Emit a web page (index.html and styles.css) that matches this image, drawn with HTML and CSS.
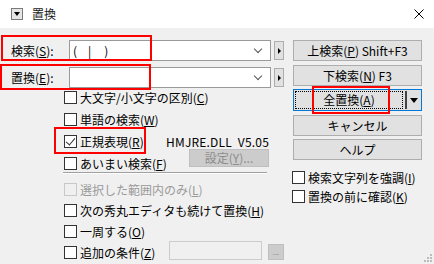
FILE: index.html
```html
<!DOCTYPE html>
<html lang="ja">
<head>
    <meta charset="UTF-8">
    <title>置換</title>
    <link rel="stylesheet" href="styles.css">
</head>
<body>
    <div class="titlebar">
        <span class="sysicon"></span>
        <span class="title">置換</span>
        <svg class="close" width="10" height="10" viewBox="0 0 10 10">
            <path d="M0.5 0.5 L9.5 9.5 M9.5 0.5 L0.5 9.5" stroke="#000" stroke-width="1"/>
        </svg>
    </div>

    <div class="dialog">
        <div class="left">
            <div class="field">
                <label class="flabel">検索(<u>S</u>):</label>
                <div class="combo"><span class="ctext">(<span class="gap"></span>|<span class="gap wide"></span>)</span><span class="chev"></span></div>
                <span class="mini"></span>
            </div>
            <div class="field second">
                <label class="flabel">置換(<u>E</u>):</label>
                <div class="combo"><span class="ctext"></span><span class="chev"></span></div>
                <span class="mini"></span>
            </div>

            <div class="opts upper">
                <div class="cb"><span class="box"></span>大文字/小文字の区別(<u>C</u>)</div>
                <div class="cb"><span class="box"></span>単語の検索(<u>W</u>)</div>
                <div class="cb"><span class="opt-w1"><span class="box checked"></span>正規表現(<u>R</u>)</span><span class="dll">HMJRE.DLL&nbsp; V5.05</span></div>
                <div class="cb"><span class="opt-w2"><span class="box"></span>あいまい検索(<u>F</u>)</span><span class="btn off setbtn">設定(<u>Y</u>)...</span></div>
            </div>

            <div class="sep"></div>

            <div class="opts lower">
                <div class="cb dis"><span class="box"></span>選択した範囲内のみ(<u>L</u>)</div>
                <div class="cb"><span class="box"></span>次の秀丸エディタも続けて置換(<u>H</u>)</div>
                <div class="cb"><span class="box"></span>一周する(<u>O</u>)</div>
                <div class="cb"><span class="opt-w3"><span class="box"></span>追加の条件(<u>Z</u>)</span><span class="tbox"></span><span class="btn off dots">...</span></div>
            </div>
        </div>

        <div class="right">
            <div class="btn">上検索(<u>P</u>) Shift+F3</div>
            <div class="btn">下検索(<u>N</u>) F3</div>
            <div class="btn split">
                <span class="main">全置換(<u>A</u>)</span>
                <span class="drop"></span>
            </div>
            <div class="btn">キャンセル</div>
            <div class="btn">ヘルプ</div>
            <div class="cb rcb first"><span class="box"></span>検索文字列を強調(<u>I</u>)</div>
            <div class="cb rcb"><span class="box"></span>置換の前に確認(<u>K</u>)</div>
        </div>
    </div>

    <!-- annotation boxes -->
    <div class="mark m1"></div>
    <div class="mark m2"></div>
    <div class="mark m3"></div>
    <div class="mark m4"></div>

    <svg class="grip" width="9" height="9" viewBox="0 0 9 9">
        <rect x="7" y="1" width="2" height="2" fill="#bcbcbc"/>
        <rect x="4" y="4" width="2" height="2" fill="#bcbcbc"/>
        <rect x="7" y="4" width="2" height="2" fill="#bcbcbc"/>
        <rect x="1" y="7" width="2" height="2" fill="#bcbcbc"/>
        <rect x="4" y="7" width="2" height="2" fill="#bcbcbc"/>
        <rect x="7" y="7" width="2" height="2" fill="#bcbcbc"/>
    </svg>
</body>
</html>
```

FILE: styles.css
```css
body {
    margin: 0;
    width: 434px;
    height: 264px;
    background: #f0f0f0;
    font-family: "Noto Sans CJK JP", "Noto Sans", sans-serif;
    font-size: 12px;
    line-height: 16px;
    color: #000;
    position: relative;
    overflow: hidden;
}
u {
    text-decoration: underline;
    text-underline-offset: 1px;
}
.titlebar {
    height: 28px;
    background: #fff;
    display: flex;
    align-items: center;
    padding-left: 11px;
}
.sysicon {
    width: 12px;
    height: 12px;
    border: 1px solid #7a7a7a;
    background: #e6e6e6;
    position: relative;
    box-sizing: border-box;
}
.sysicon::after {
    content: "";
    position: absolute;
    left: 2px;
    top: 3px;
    border-left: 3px solid transparent;
    border-right: 3px solid transparent;
    border-top: 4px solid #000;
}
.title {
    margin-left: 9px;
    color: #1a1a1a;
}
.close {
    margin-left: auto;
    margin-right: 10px;
}

.dialog {
    display: flex;
    padding-top: 12px;
}
.left {
    width: 284px;
}
.right {
    width: 129px;
    margin-left: 9px;
    display: flex;
    flex-direction: column;
}

.field {
    display: flex;
    align-items: center;
    height: 21px;
}
.field.second {
    margin-top: 6px;
}
.flabel {
    width: 58px;
    padding-left: 11px;
}
.combo {
    width: 202px;
    height: 21px;
    box-sizing: border-box;
    border: 1px solid #9a9a9a;
    background: #fff;
    display: flex;
    align-items: center;
    padding-left: 3px;
}
.ctext {
    flex: 1;
    display: flex;
    align-items: center;
}
.gap {
    display: inline-block;
    width: 11px;
}
.gap.wide {
    width: 13px;
}
.chev {
    width: 5px;
    height: 5px;
    border-right: 1px solid #555;
    border-bottom: 1px solid #555;
    transform: rotate(45deg);
    margin: 0 9px 4px 0;
}
.mini {
    width: 10px;
    height: 19px;
    margin-left: 3px;
    box-sizing: border-box;
    border: 1px solid #adadad;
    background: #e1e1e1;
    position: relative;
}
.mini::after {
    content: "";
    position: absolute;
    left: 3px;
    top: 6px;
    border-top: 3px solid transparent;
    border-bottom: 3px solid transparent;
    border-left: 3px solid #000;
}

.opts {
    padding-left: 64px;
    display: flex;
    flex-direction: column;
}
.opts.upper {
    margin-top: -1px;
    gap: 1px;
}
.cb {
    display: flex;
    align-items: center;
    height: 21px;
    white-space: nowrap;
}
.box {
    width: 13px;
    height: 13px;
    box-sizing: border-box;
    border: 1px solid #333;
    background: #fff;
    margin-right: 3px;
    flex: none;
    position: relative;
}
.box.checked::after {
    content: "";
    position: absolute;
    left: 3px;
    top: 0px;
    width: 4px;
    height: 8px;
    border-right: 1px solid #333;
    border-bottom: 1px solid #333;
    transform: rotate(40deg);
}
.opt-w1, .opt-w2, .opt-w3 {
    display: flex;
    align-items: center;
}
.opt-w1 {
    width: 102px;
}
.opt-w2 {
    width: 125px;
}
.opt-w3 {
    width: 109px;
}
.dll {
    letter-spacing: 0.2px;
}

.btn {
    height: 21px;
    box-sizing: border-box;
    border: 1px solid #adadad;
    background: #e1e1e1;
    display: flex;
    align-items: center;
    justify-content: center;
    white-space: nowrap;
}
.right .btn + .btn {
    margin-top: 4px;
}
.right .btn:nth-child(3),
.right .btn:nth-child(5) {
    margin-top: 3px;
}
.btn.off {
    background: #cccccc;
    border-color: #bfbfbf;
    color: #8c8c8c;
}
.setbtn {
    width: 80px;
    height: 18px;
    align-self: flex-start;
    margin-top: -4px;
}
.tbox {
    width: 96px;
    height: 19px;
    box-sizing: border-box;
    border: 1px solid #cccccc;
    background: #f0f0f0;
    margin-top: -4px;
}
.dots {
    width: 17px;
    height: 16px;
    margin-left: 6px;
    margin-top: -2px;
    font-size: 8px;
}

.split {
    border: 1px solid #0078d7;
    padding: 1px;
    height: 22px;
    justify-content: flex-start;
}
.split .main {
    flex: 1;
    height: 18px;
    box-sizing: border-box;
    border: 1px dotted #000;
    display: flex;
    align-items: center;
    justify-content: center;
}
.split .drop {
    width: 15px;
    height: 18px;
    border-left: 2px solid #444;
    margin-left: 2px;
    position: relative;
    box-sizing: border-box;
}
.split .drop::after {
    content: "";
    position: absolute;
    left: 3px;
    top: 7px;
    border-left: 4px solid transparent;
    border-right: 4px solid transparent;
    border-top: 5px solid #000;
}

.sep {
    margin: -2px 17px 0 63px;
    height: 0;
    border-top: 1px solid #a0a0a0;
    border-bottom: 1px solid #fff;
}
.opts.lower {
    margin-top: 5px;
}
.cb.dis {
    color: #9a9a9a;
}
.cb.dis .box {
    border-color: #c8c8c8;
    background: #f0f0f0;
}

.rcb {
    margin-left: -1px;
    height: 19px;
}
.rcb.first {
    margin-top: 8px;
}

.mark {
    position: absolute;
    border: 2px solid #ff0000;
    box-sizing: border-box;
}
.m1 {
    left: 1px;
    top: 35px;
    width: 151px;
    height: 26px;
}
.m2 {
    left: 0;
    top: 64px;
    width: 151px;
    height: 26px;
}
.m3 {
    left: 54px;
    top: 127px;
    width: 92px;
    height: 27px;
}
.m4 {
    left: 312px;
    top: 86px;
    width: 78px;
    height: 28px;
}
.grip {
    position: absolute;
    right: 2px;
    bottom: 2px;
}
```
